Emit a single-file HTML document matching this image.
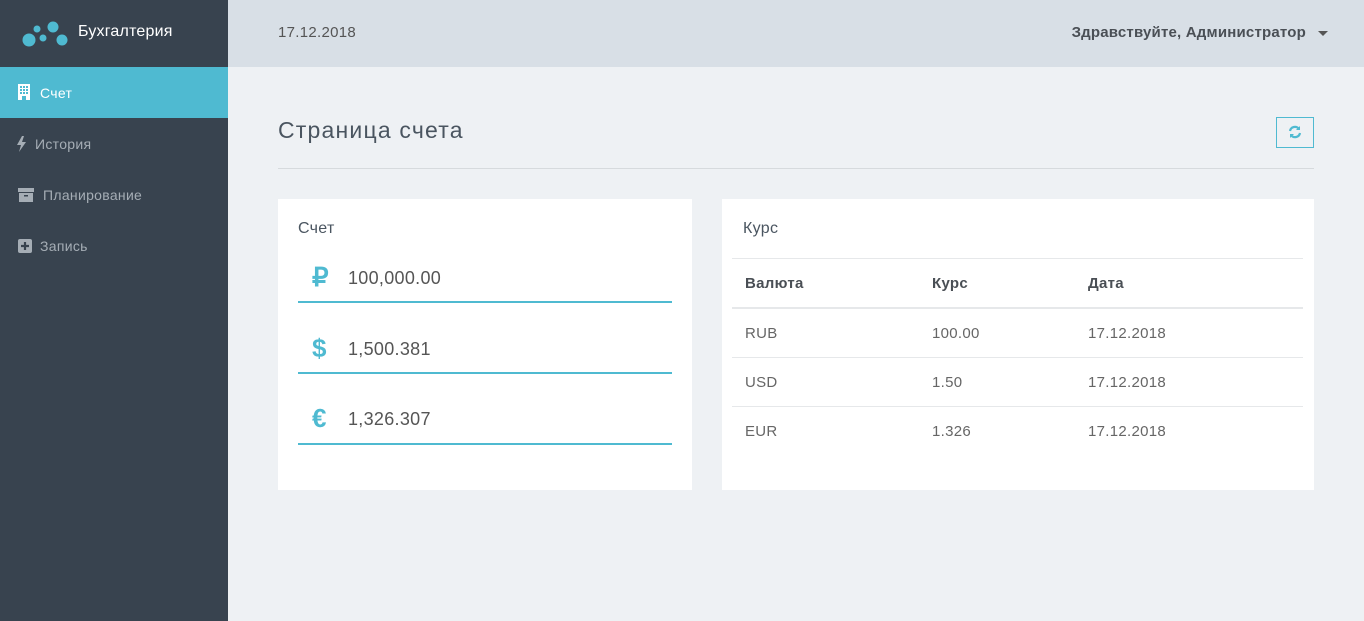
<!DOCTYPE html>
<html><head><meta charset="utf-8"><style>
*{margin:0;padding:0;box-sizing:border-box}
body{width:1364px;height:621px;overflow:hidden;font-family:"Liberation Sans","Noto Sans CJK SC",sans-serif;background:#eef1f4;position:relative;color:#555;letter-spacing:0.3px}
.sb{position:absolute;left:0;top:0;width:228px;height:621px;background:#38434f}
.logo{position:absolute;left:0;top:0;width:228px;height:67px}
.logo span{position:absolute;left:78px;top:23px;color:#fff;font-size:16px;letter-spacing:0.2px}
.nav{position:absolute;left:0;width:228px;height:51px;color:#a5adb5;font-size:14px;line-height:53px}
.nav.act{background:#4fbad1;color:#fff}
.top{position:absolute;left:228px;top:0;right:0;height:67px;background:#d8dfe6}
.date{position:absolute;left:50px;top:24px;font-size:15px;color:#555}
.user{position:absolute;right:58px;top:24px;font-size:15px;font-weight:bold;color:#4a4f55;letter-spacing:0.2px}
.caret{position:absolute;right:36px;top:31px;border-left:5px solid transparent;border-right:5px solid transparent;border-top:5px solid #555}
h1{position:absolute;left:278px;top:117px;font-size:23px;font-weight:normal;color:#4a5560;letter-spacing:1.2px}
.hr{position:absolute;left:278px;top:168px;width:1036px;height:1px;background:#d6dadd}
.btn{position:absolute;left:1276px;top:117px;width:38px;height:31px;border:1px solid #4fbad1}
.card{position:absolute;background:#fff;top:199px;height:291px}
.ct{position:absolute;font-size:16px;color:#4a5560}
.row{position:absolute;left:20px;width:374px;height:2px;background:#4fbad1}
.cur{position:absolute;left:34px;font-size:26px;font-weight:bold;color:#4fbad1}
.val{position:absolute;left:70px;font-size:18px;color:#555}
.tl{position:absolute;left:10px;width:571px;height:1px;background:#e6e8ea}
.td{position:absolute;font-size:15px;color:#666}
.th{font-weight:bold;color:#4a4f55}
</style></head><body>
<div class="sb">
<div class="logo"><svg width="78" height="67" style="position:absolute;left:0;top:0"><g fill="#4fbad1"><circle cx="29" cy="40" r="6.5"/><circle cx="37" cy="29" r="3.5"/><circle cx="43" cy="38" r="3.5"/><circle cx="53" cy="27" r="5.5"/><circle cx="62" cy="40" r="5.5"/></g></svg><span>Бухгалтерия</span></div>
<div class="nav act" style="top:67px"><svg width="12" height="16" style="position:absolute;left:18px;top:17px"><rect width="12" height="16" fill="#fff"/><g fill="#4fbad1"><rect x="2" y="2" width="2" height="2"/><rect x="5" y="2" width="2" height="2"/><rect x="8" y="2" width="2" height="2"/><rect x="2" y="5" width="2" height="2"/><rect x="5" y="5" width="2" height="2"/><rect x="8" y="5" width="2" height="2"/><rect x="2" y="8" width="2" height="2"/><rect x="5" y="8" width="2" height="2"/><rect x="8" y="8" width="2" height="2"/><rect x="4" y="12" width="4" height="4"/></g></svg><span style="position:absolute;left:40px">Счет</span></div>
<div class="nav" style="top:118px"><svg width="9" height="16" style="position:absolute;left:17px;top:18px"><path d="M5 0L0 9h4l-2 7 7-10H5l2-6z" fill="#a5adb5"/></svg><span style="position:absolute;left:35px">История</span></div>
<div class="nav" style="top:169px"><svg width="16" height="14" style="position:absolute;left:18px;top:19px"><rect width="16" height="4" fill="#a5adb5"/><rect x="1" y="5" width="14" height="9" fill="#a5adb5"/><rect x="6" y="7" width="4" height="1.5" fill="#38434f"/></svg><span style="position:absolute;left:43px">Планирование</span></div>
<div class="nav" style="top:220px"><svg width="14" height="14" style="position:absolute;left:18px;top:19px"><rect width="14" height="14" rx="2" fill="#a5adb5"/><path d="M7 3v8M3 7h8" stroke="#38434f" stroke-width="2.2"/></svg><span style="position:absolute;left:40px">Запись</span></div>
</div>
<div class="top"><div class="date">17.12.2018</div><div class="user">Здравствуйте, Администратор</div><div class="caret"></div></div>
<h1>Страница счета</h1>
<div class="btn"><svg width="14" height="14" viewBox="0 0 14 14" style="position:absolute;left:11px;top:7px" fill="none" stroke="#4fbad1" stroke-width="2.2"><path d="M2 6a5 5 0 0 1 9-2"/><path d="M12 8a5 5 0 0 1-9 2"/><path d="M12 1v4H8z" fill="#4fbad1" stroke="none"/><path d="M2 13V9h4z" fill="#4fbad1" stroke="none"/></svg></div>
<div class="hr"></div>
<div class="card" style="left:278px;width:414px">
<div class="ct" style="left:20px;top:21px">Счет</div>
<div class="cur" style="top:63px">₽</div><div class="val" style="top:69px">100,000.00</div><div class="row" style="top:102px"></div>
<div class="cur" style="top:134px">$</div><div class="val" style="top:140px">1,500.381</div><div class="row" style="top:173px"></div>
<div class="cur" style="top:204px">€</div><div class="val" style="top:210px">1,326.307</div><div class="row" style="top:244px"></div>
</div>
<div class="card" style="left:722px;width:592px">
<div class="ct" style="left:21px;top:21px">Курс</div>
<div class="tl" style="top:59px"></div>
<div class="td th" style="left:23px;top:76px">Валюта</div><div class="td th" style="left:210px;top:76px">Курс</div><div class="td th" style="left:366px;top:76px">Дата</div>
<div class="tl" style="top:108px;height:2px"></div>
<div class="td" style="left:23px;top:126px">RUB</div><div class="td" style="left:210px;top:126px">100.00</div><div class="td" style="left:366px;top:126px">17.12.2018</div>
<div class="tl" style="top:158px"></div>
<div class="td" style="left:23px;top:175px">USD</div><div class="td" style="left:210px;top:175px">1.50</div><div class="td" style="left:366px;top:175px">17.12.2018</div>
<div class="tl" style="top:207px"></div>
<div class="td" style="left:23px;top:224px">EUR</div><div class="td" style="left:210px;top:224px">1.326</div><div class="td" style="left:366px;top:224px">17.12.2018</div>
</div>
</body></html>
